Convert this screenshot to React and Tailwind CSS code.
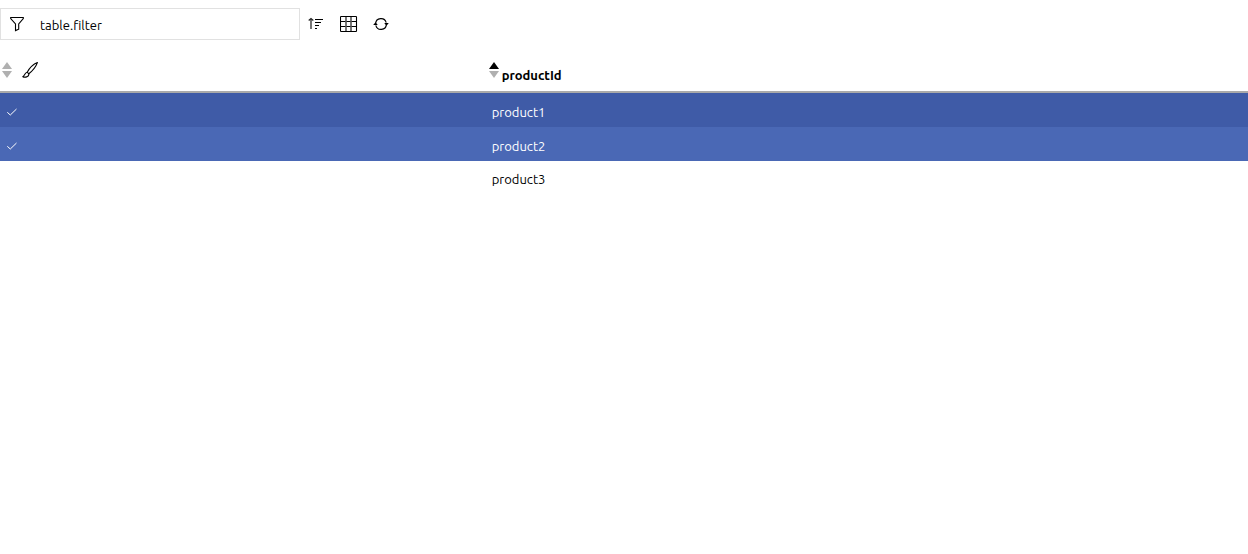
const products = [
  { id: "product1", selected: true },
  { id: "product2", selected: true },
  { id: "product3", selected: false },
];

function FilterIcon() {
  return (
    <svg className="h-4 w-4" viewBox="0 0 16 16" fill="none" stroke="#000" strokeWidth="1.1" aria-hidden="true">
      <path d="M1.7 1.5H14.3V2.5L9.7 8V13.2L6.5 14.6V8L1.7 2.5Z" />
    </svg>
  );
}

function SortLinesIcon() {
  return (
    <svg className="h-4 w-4" viewBox="0 0 16 16" fill="none" aria-hidden="true">
      <path d="M3 3V13" stroke="#777" strokeWidth="2" />
      <path d="M0.7 4.5L3 2.5L5.3 4.5" stroke="#222" strokeWidth="1.2" />
      <path d="M7 3.5H15M7 6.5H13M7 9.5H11M7 12.5H9" stroke="#000" />
    </svg>
  );
}

function GridIcon() {
  return (
    <svg className="h-[18px] w-[18px]" viewBox="0 0 18 18" fill="none" stroke="#000" aria-hidden="true">
      <rect x="0.5" y="1.5" width="16" height="15" rx="0.6" strokeWidth="1.1" />
      <path d="M1 6.5H16M1 11.5H16" />
      <path d="M6 2V16M11 2V16" stroke="#555" strokeWidth="1.6" />
    </svg>
  );
}

function RefreshIcon() {
  return (
    <svg className="h-4 w-4" viewBox="0 0 16 16" fill="none" stroke="#000" strokeWidth="1.1" aria-hidden="true">
      <path d="M2.6 7.6A5.4 5.4 0 0 1 13.2 6.6M13.4 8.4A5.4 5.4 0 0 1 2.8 9.4" />
      <path d="M0.2 9L2.5 6.2L4.8 9ZM11.2 7L13.5 9.8L15.8 7Z" fill="#000" stroke="none" />
    </svg>
  );
}

function BrushIcon() {
  return (
    <svg className="h-4 w-4" viewBox="0 0 16 16" fill="none" stroke="#000" strokeWidth="1.1" strokeLinejoin="round" aria-hidden="true">
      <path d="M15.4 0.6C12 2 7.5 6.2 5.2 10.2L6.8 11.8C10.3 9 13.8 5 15.4 0.6Z" />
      <path d="M5.2 10.2C2.8 10.4 3.2 13 0.8 14.7C2.6 15.6 7.4 15.2 6.8 11.8" />
    </svg>
  );
}

function Sorter({ ascending }) {
  return (
    <svg className="h-4 w-[10px]" viewBox="0 0 10 16" aria-hidden="true">
      <path d="M5 0L10 7H0Z" fill={ascending ? "#000" : "#b0b0b0"} />
      <path d="M0 9H10L5 16Z" fill="#b0b0b0" />
    </svg>
  );
}

function CheckIcon() {
  return (
    <svg className="h-3 w-3" viewBox="0 0 12 12" fill="none" stroke="#fff" role="img" aria-label="selected">
      <path d="M1.3 6.3L4.3 9L10.5 3" />
    </svg>
  );
}

export default function App() {
  return (
    <main className="bg-white pt-2 font-['Ubuntu','Noto_Sans',sans-serif] text-[13px] leading-5 text-black">
      <div className="flex h-8 items-center">
        <label className="flex h-8 w-[300px] items-center gap-[15px] border border-[#e1e1e1] pl-2">
          <FilterIcon />
          <input
            type="text"
            aria-label="table.filter"
            placeholder="table.filter"
            className="min-w-0 flex-1 bg-transparent pt-[2px] outline-none placeholder:text-black placeholder:opacity-100"
          />
        </label>
        <button type="button" aria-label="Sort" className="flex h-8 w-8 items-center justify-center">
          <SortLinesIcon />
        </button>
        <button type="button" aria-label="Columns" className="flex h-8 w-[34px] items-center justify-center">
          <GridIcon />
        </button>
        <button type="button" aria-label="Refresh" className="flex h-8 w-[30px] items-center justify-center">
          <RefreshIcon />
        </button>
      </div>

      <table className="mt-2 w-full table-fixed border-collapse text-left">
        <thead>
          <tr>
            <th scope="col" className="w-[39%] p-0 align-top">
              <div className="flex h-[43px] pl-[2px]">
                <button type="button" aria-label="Sort by selection" className="flex items-start gap-[10px] pt-[14px]">
                  <Sorter />
                  <BrushIcon />
                </button>
              </div>
            </th>
            <th scope="col" className="p-0 align-top">
              <div className="flex h-[43px] pl-[2px]">
                <button type="button" className="flex items-start gap-[3px] pt-[14px] font-bold">
                  <Sorter ascending />
                  <span className="pt-[3px]">productId</span>
                </button>
              </div>
            </th>
          </tr>
          <tr aria-hidden="true">
            <td colSpan={2} className="h-[2px] bg-[#aaa] p-0" />
          </tr>
        </thead>
        <tbody>
          {products.map(({ id, selected }) => (
            <tr
              key={id}
              aria-selected={selected}
              className={selected ? "h-[34px] bg-[#4a68b5] text-white odd:bg-[#3f5ba7]" : "h-8"}
            >
              <td className="px-[6px] pt-1 pb-0">{selected && <CheckIcon />}</td>
              <td className="px-[5px] pt-1 pb-0">{id}</td>
            </tr>
          ))}
        </tbody>
      </table>
    </main>
  );
}
